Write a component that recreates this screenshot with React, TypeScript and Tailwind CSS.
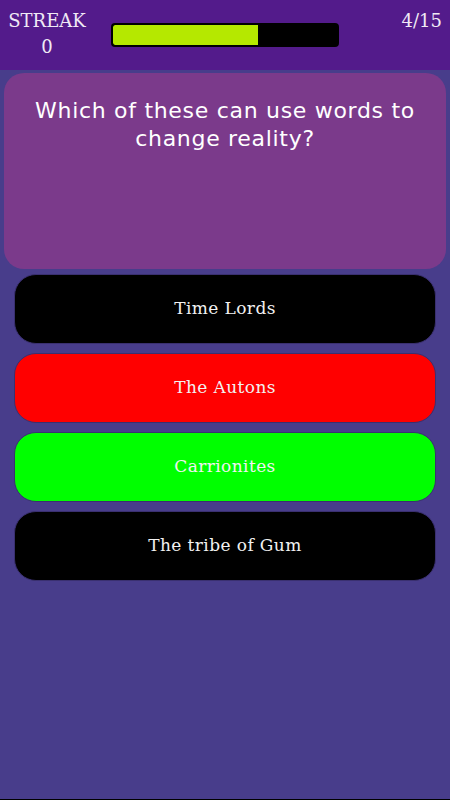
export default function App() {
  const answers = [
    { label: "Time Lords", bg: "bg-black" },
    { label: "The Autons", bg: "bg-[#ff0000]" },
    { label: "Carrionites", bg: "bg-[#00ff00]" },
    { label: "The tribe of Gum", bg: "bg-black" },
  ]
  const progress = 0.647

  return (
    <div className="h-[800px] w-[450px] flex flex-col bg-[#483d8b] border-b border-black">
      {/* Header */}
      <div className="h-[70px] shrink-0 bg-[#531b8b] flex items-start text-[#f0eaf5] font-['DejaVu_Serif',serif]">
        <div className="w-[94px] pt-[8px] flex flex-col items-center text-[18px] leading-[26px]">
          <span>STREAK</span>
          <span>0</span>
        </div>
        <div className="ml-[17px] mt-[23px] w-[228px] h-[24px] bg-black border-2 border-black rounded-[4px] overflow-hidden">
          <div className="h-full bg-[#b5e800] rounded-l-[2px]" style={{ width: `${progress * 100}%` }} />
        </div>
        <div className="ml-auto pr-[8px] pt-[8px] text-[18px] leading-[26px]">4/15</div>
      </div>

      {/* Question */}
      <div className="mx-[4px] mt-[3px] h-[196px] rounded-[20px] bg-[#7b3a8b] px-4 pt-[24px] text-center text-white text-[22px] leading-[28px] tracking-[0.7px] font-['DejaVu_Sans',sans-serif]">
        Which of these can use words to change reality?
      </div>

      {/* Answers */}
      <div className="mx-[14px] mt-[5px] flex flex-col gap-[9px]">
        {answers.map((a) => (
          <button
            key={a.label}
            className={`h-[70px] w-full rounded-[22px] ${a.bg} border border-[#3a3070] text-[#f2f2f2] text-[17px] tracking-[0.4px] font-['DejaVu_Serif',serif] flex items-center justify-center`}
          >
            {a.label}
          </button>
        ))}
      </div>
    </div>
  )
}
